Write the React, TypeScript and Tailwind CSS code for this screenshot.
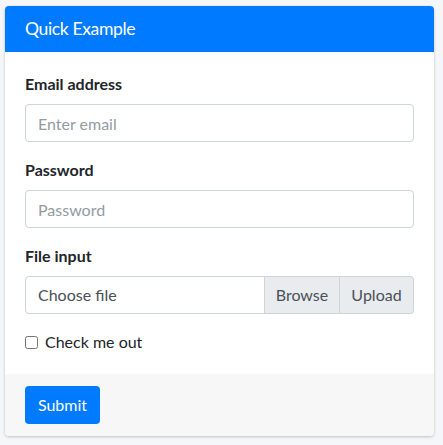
import React from "react";

export default function App() {
  return (
    <div className="min-h-[445px] w-[443px] bg-[#f4f6f9] pt-[6px] pl-[5px]" style={{ fontFamily: "Lato, 'Source Sans Pro', sans-serif" }}>
      <div className="w-[429px] rounded-[4px] bg-white shadow-[0_0_1px_rgba(0,0,0,0.125),0_1px_3px_rgba(0,0,0,0.2)]">
        <div className="rounded-t-[4px] bg-[#007bff] px-5 py-3 border-b border-transparent">
          <h3 className="text-[17.6px] leading-[21px] tracking-[-0.4px] text-white font-normal">Quick Example</h3>
        </div>
        <div className="p-5 text-[16px] text-[#212529]">
          <div className="mb-4">
            <label className="mb-2 block font-bold leading-6">Email address</label>
            <input
              type="email"
              placeholder="Enter email"
              className="h-[38px] w-full rounded-[4px] border border-[#ced4da] px-3 text-[16px] text-[#495057] placeholder:text-[#939ba2] outline-none"
            />
          </div>
          <div className="mb-4">
            <label className="mb-2 block font-bold leading-6">Password</label>
            <input
              type="password"
              placeholder="Password"
              className="h-[38px] w-full rounded-[4px] border border-[#ced4da] px-3 text-[16px] text-[#495057] placeholder:text-[#939ba2] outline-none"
            />
          </div>
          <div className="mb-4">
            <label className="mb-2 block font-bold leading-6">File input</label>
            <div className="flex h-[38px] w-full">
              <div className="flex flex-1 items-stretch rounded-l-[4px] border border-[#ced4da] text-[#495057]">
                <span className="flex flex-1 items-center px-3">Choose file</span>
                <span className="flex w-[75px] justify-center items-center border-l border-[#ced4da] bg-[#e9ecef]">Browse</span>
              </div>
              <span className="flex w-[74px] justify-center items-center rounded-r-[4px] border border-l-0 border-[#ced4da] bg-[#e9ecef] text-[#495057]">Upload</span>
            </div>
          </div>
          <div className="flex items-center h-6">
            <input type="checkbox" className="h-[13px] w-[13px] m-0" />
            <label className="ml-[7px] leading-6">Check me out</label>
          </div>
        </div>
        <div className="rounded-b-[4px] bg-[#f7f7f7] px-5 py-3">
          <button className="h-[38px] w-[75px] rounded-[4px] bg-[#007bff] text-[16px] text-white">Submit</button>
        </div>
      </div>
    </div>
  );
}
